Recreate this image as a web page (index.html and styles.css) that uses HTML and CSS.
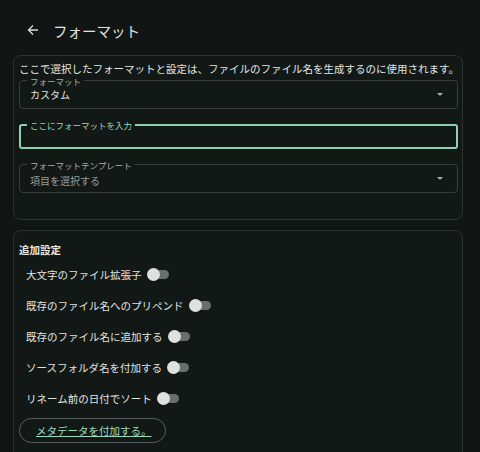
FILE: index.html
```html
<!DOCTYPE html>
<html lang="ja">
<head>
<meta charset="utf-8">
<link rel="stylesheet" href="styles.css">
</head>
<body>
<header class="topbar">
  <svg class="back" width="12" height="12" viewBox="0 0 12 12"><path d="M11 6H1.5M6 1.5L1.5 6L6 10.5" fill="none" stroke="#d9dcda" stroke-width="1.3"/></svg>
  <h1 class="title">フォーマット</h1>
</header>
<main class="content">
  <section class="card card-format">
    <p class="desc">ここで選択したフォーマットと設定は、ファイルのファイル名を生成するのに使用されます。</p>
    <div class="field field-select">
      <span class="flabel">フォーマット</span>
      <span class="fvalue">カスタム</span>
      <span class="caret"></span>
    </div>
    <div class="field field-input">
      <span class="flabel flabel-active">ここにフォーマットを入力</span>
    </div>
    <div class="field field-select field-template">
      <span class="flabel">フォーマットテンプレート</span>
      <span class="fvalue fvalue-muted">項目を選択する</span>
      <span class="caret"></span>
    </div>
  </section>
  <section class="card card-extra">
    <h2 class="section-title">追加設定</h2>
    <div class="row"><span>大文字のファイル拡張子</span><span class="toggle"><span class="knob"></span></span></div>
    <div class="row"><span>既存のファイル名へのプリペンド</span><span class="toggle"><span class="knob"></span></span></div>
    <div class="row"><span>既存のファイル名に追加する</span><span class="toggle"><span class="knob"></span></span></div>
    <div class="row"><span>ソースフォルダ名を付加する</span><span class="toggle"><span class="knob"></span></span></div>
    <div class="row"><span>リネーム前の日付でソート</span><span class="toggle"><span class="knob"></span></span></div>
    <button class="pill">メタデータを付加する。</button>
  </section>
</main>
</body>
</html>
```
FILE: styles.css
```css
* { box-sizing: border-box; }
html, body { margin: 0; padding: 0; }
body {
  background: #111615;
  color: #e1e3e1;
  font-family: "Noto Sans CJK JP", "Noto Sans", sans-serif;
  height: 452px;
  overflow: hidden;
}
.topbar {
  height: 55px;
  display: flex;
  align-items: center;
  padding: 5px 0 0 27px;
}
.back { display: block; }
.title {
  margin: 0 0 0 14px;
  font-size: 14.5px;
  font-weight: 400;
  color: #e1e3e1;
}
.content {
  padding: 0 17px 0 13px;
  display: flex;
  flex-direction: column;
  gap: 10px;
}
.card {
  border: 1px solid #2b322f;
  border-radius: 8px;
  background: #121816;
  padding: 0 4px 0 5px;
}
.card-format {
  padding-top: 7px;
  padding-bottom: 26px;
  display: flex;
  flex-direction: column;
}
.desc {
  margin: 0;
  font-size: 10.5px;
  line-height: 11px;
  white-space: nowrap;
  color: #e4e6e4;
}
.field {
  position: relative;
  border: 1px solid #363d3a;
  border-radius: 4px;
  height: 29px;
  display: flex;
  align-items: center;
  padding: 0 10px;
}
.field-select { margin-top: 6px; }
.field-input {
  margin-top: 15px;
  height: 25px;
  border: 2px solid #8fd0b3;
  border-radius: 3px;
}
.field-template { margin-top: 15px; }
.flabel {
  position: absolute;
  left: 7px;
  top: -4px;
  padding: 0 3px;
  background: #121816;
  font-size: 8.5px;
  line-height: 8px;
  color: #a9aeab;
}
.flabel-active { color: #9ad6ba; top: -5px; left: 6px; }
.fvalue {
  font-size: 10px;
  color: #e1e3e1;
}
.field-template .fvalue { padding-top: 3px; }
.fvalue-muted { color: #989d9a; }
.caret {
  margin-left: auto;
  margin-right: 4px;
  width: 0;
  height: 0;
  border-left: 3px solid transparent;
  border-right: 3px solid transparent;
  border-top: 3px solid #a6aaa8;
}
.card-extra {
  padding: 11px 4px 20px 5px;
  min-height: 240px;
  border-bottom-left-radius: 0;
  border-bottom-right-radius: 0;
}
.section-title {
  margin: 0 0 1px;
  font-size: 10.5px;
  line-height: 16px;
  font-weight: 700;
  color: #e6e8e6;
}
.row {
  display: flex;
  align-items: center;
  gap: 6px;
  height: 31px;
  padding-left: 7px;
  font-size: 10.5px;
  color: #e1e3e1;
}
.toggle {
  width: 21px;
  height: 9px;
  border-radius: 5px;
  background: #6a6f6d;
  display: inline-flex;
  align-items: center;
}
.knob {
  width: 13px;
  height: 13px;
  border-radius: 50%;
  background: #dfe1df;
  margin-left: -1px;
}
.pill {
  margin-top: 4px;
  height: 25px;
  width: 147px;
  border: 1px solid #565d5a;
  border-radius: 13px;
  background: transparent;
  color: #9fd9bd;
  font-family: "Noto Sans CJK JP", "Noto Sans", sans-serif;
  font-size: 10.5px;
  text-decoration: underline;
  text-align: left;
  padding: 0 0 0 16px;
  display: block;
}
```
